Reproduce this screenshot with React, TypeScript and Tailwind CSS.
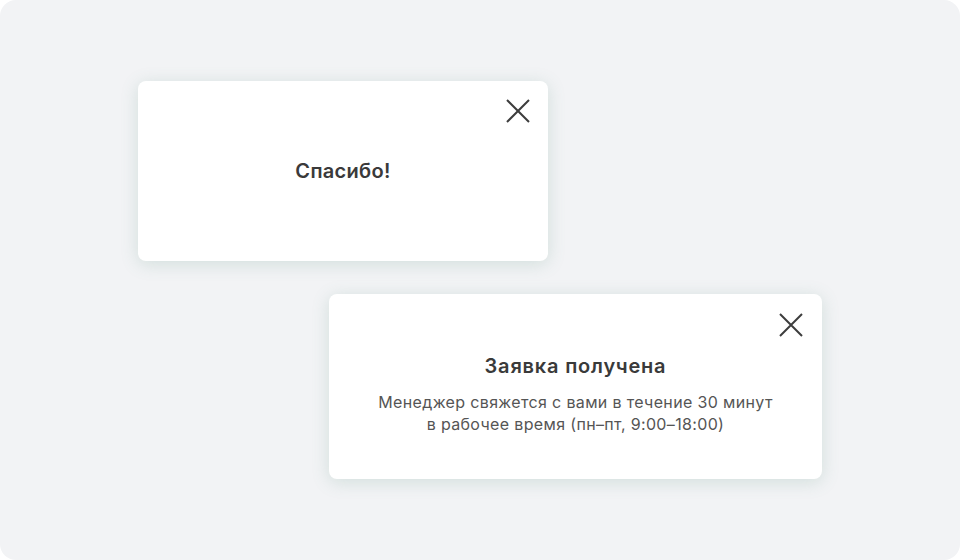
import React from "react";

function CloseIcon() {
  return (
    <svg width="24" height="24" viewBox="0 0 24 24" fill="none" stroke="#3d3d3d" strokeWidth="2" strokeLinecap="butt">
      <path d="M1 1L23 23M23 1L1 23" />
    </svg>
  );
}

export default function App() {
  return (
    <div className="w-[960px] h-[560px] bg-white" style={{ fontFamily: "Inter, 'Noto Sans', sans-serif" }}>
      <div className="w-full h-full rounded-2xl bg-[#f2f3f5] flex flex-col pt-[81px]">
        <div className="relative ml-[138px] w-[410px] h-[180px] bg-white rounded-lg shadow-[0_3px_18px_rgba(80,140,120,0.2)] flex items-center justify-center">
          <button className="absolute right-[18px] top-[18px]">
            <CloseIcon />
          </button>
          <div className="text-[20px] font-semibold text-[#3a3a3a] tracking-[0.3px]">Спасибо!</div>
        </div>
        <div className="relative ml-[329px] mt-[33px] w-[493px] h-[185px] bg-white rounded-lg shadow-[0_3px_18px_rgba(80,140,120,0.2)] flex flex-col items-center pt-[58px]">
          <button className="absolute right-[19px] top-[19px]">
            <CloseIcon />
          </button>
          <div className="text-[20px] leading-[28px] font-semibold text-[#3a3a3a] tracking-[0.8px]">Заявка получена</div>
          <div className="mt-[11px] text-[16px] leading-[22px] text-[#555] text-center tracking-[0.35px]">
            Менеджер свяжется с вами в течение 30 минут
            <br />
            в рабочее время (пн–пт, 9:00–18:00)
          </div>
        </div>
      </div>
    </div>
  );
}
